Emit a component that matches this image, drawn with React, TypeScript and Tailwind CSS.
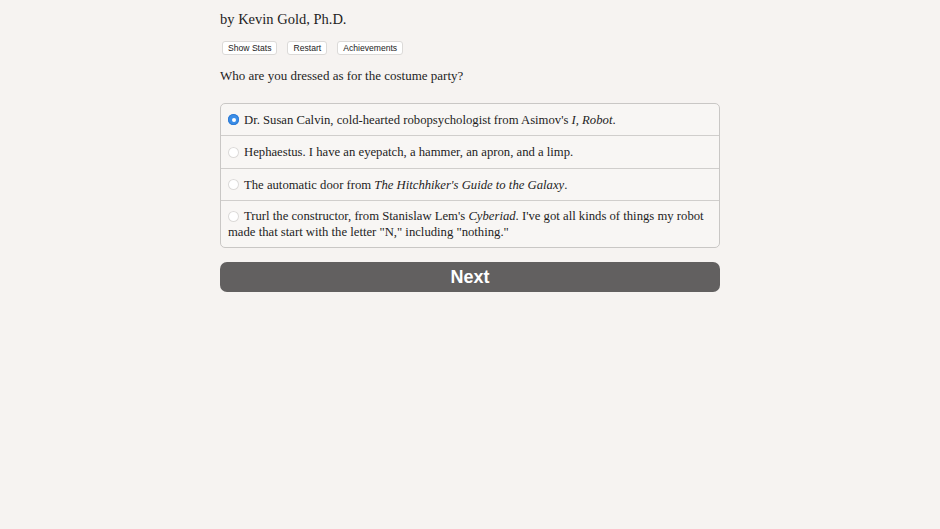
import React from "react";

const serif = { fontFamily: '"Liberation Serif", "DejaVu Serif", serif' };

function Radio({ checked }: { checked?: boolean }) {
  return (
    <span
      className={
        "inline-flex w-[11px] h-[11px] rounded-full items-center justify-center mr-[5px] align-[2px] " +
        (checked
          ? "bg-[#3b8ee8] shadow-[inset_0_0_0_1px_#2f7bd4]"
          : "bg-white shadow-[inset_0_0_0_1px_#dcdad8]")
      }
    >
      <span className={"w-[4px] h-[4px] rounded-full " + (checked ? "bg-white" : "bg-transparent")} />
    </span>
  );
}

export default function App() {
  const btn =
    "h-[14px] px-[5px] bg-white border border-[#dcdad8] rounded-[3px] text-[8.6px] leading-[12px] text-[#222] font-['Liberation_Sans',Arial,sans-serif]";
  return (
    <div className="w-[940px] h-[529px] bg-[#f6f3f1] text-[#1e1e1e]" style={serif}>
      <div className="w-[500px] ml-[220px] pt-[10px]">
        <div className="text-[14.5px] leading-[18px]">by Kevin Gold, Ph.D.</div>
        <div className="flex gap-[10px] mt-[13px] ml-[2px]">
          <button className={btn}>Show Stats</button>
          <button className={btn}>Restart</button>
          <button className={btn}>Achievements</button>
        </div>
        <div className="text-[13px] leading-[16px] mt-[13px]">Who are you dressed as for the costume party?</div>
        <div className="mt-[19px] border border-[#c9c7c5] rounded-[5px] bg-[#f8f6f4] text-[12.7px] leading-[16px]">
          <div className="h-[32px] flex items-center px-[7px] border-b border-[#d0cecc]">
            <span><Radio checked />Dr. Susan Calvin, cold-hearted robopsychologist from Asimov's <i>I, Robot</i>.</span>
          </div>
          <div className="h-[33px] flex items-center px-[7px] border-b border-[#d0cecc]">
            <span><Radio />Hephaestus. I have an eyepatch, a hammer, an apron, and a limp.</span>
          </div>
          <div className="h-[32px] flex items-center px-[7px] border-b border-[#d0cecc]">
            <span><Radio />The automatic door from <i>The Hitchhiker's Guide to the Galaxy</i>.</span>
          </div>
          <div className="px-[7px] pt-[7px] pb-[7px]">
            <span><Radio />Trurl the constructor, from Stanislaw Lem's <i>Cyberiad</i>. I've got all kinds of things my robot made that start with the letter "N," including "nothing."</span>
          </div>
        </div>
        <button className="mt-[14px] w-[500px] h-[30px] rounded-[7px] bg-[#626060] text-white text-[18px] font-bold font-['Liberation_Sans',Arial,sans-serif] leading-[30px]">
          Next
        </button>
      </div>
    </div>
  );
}
